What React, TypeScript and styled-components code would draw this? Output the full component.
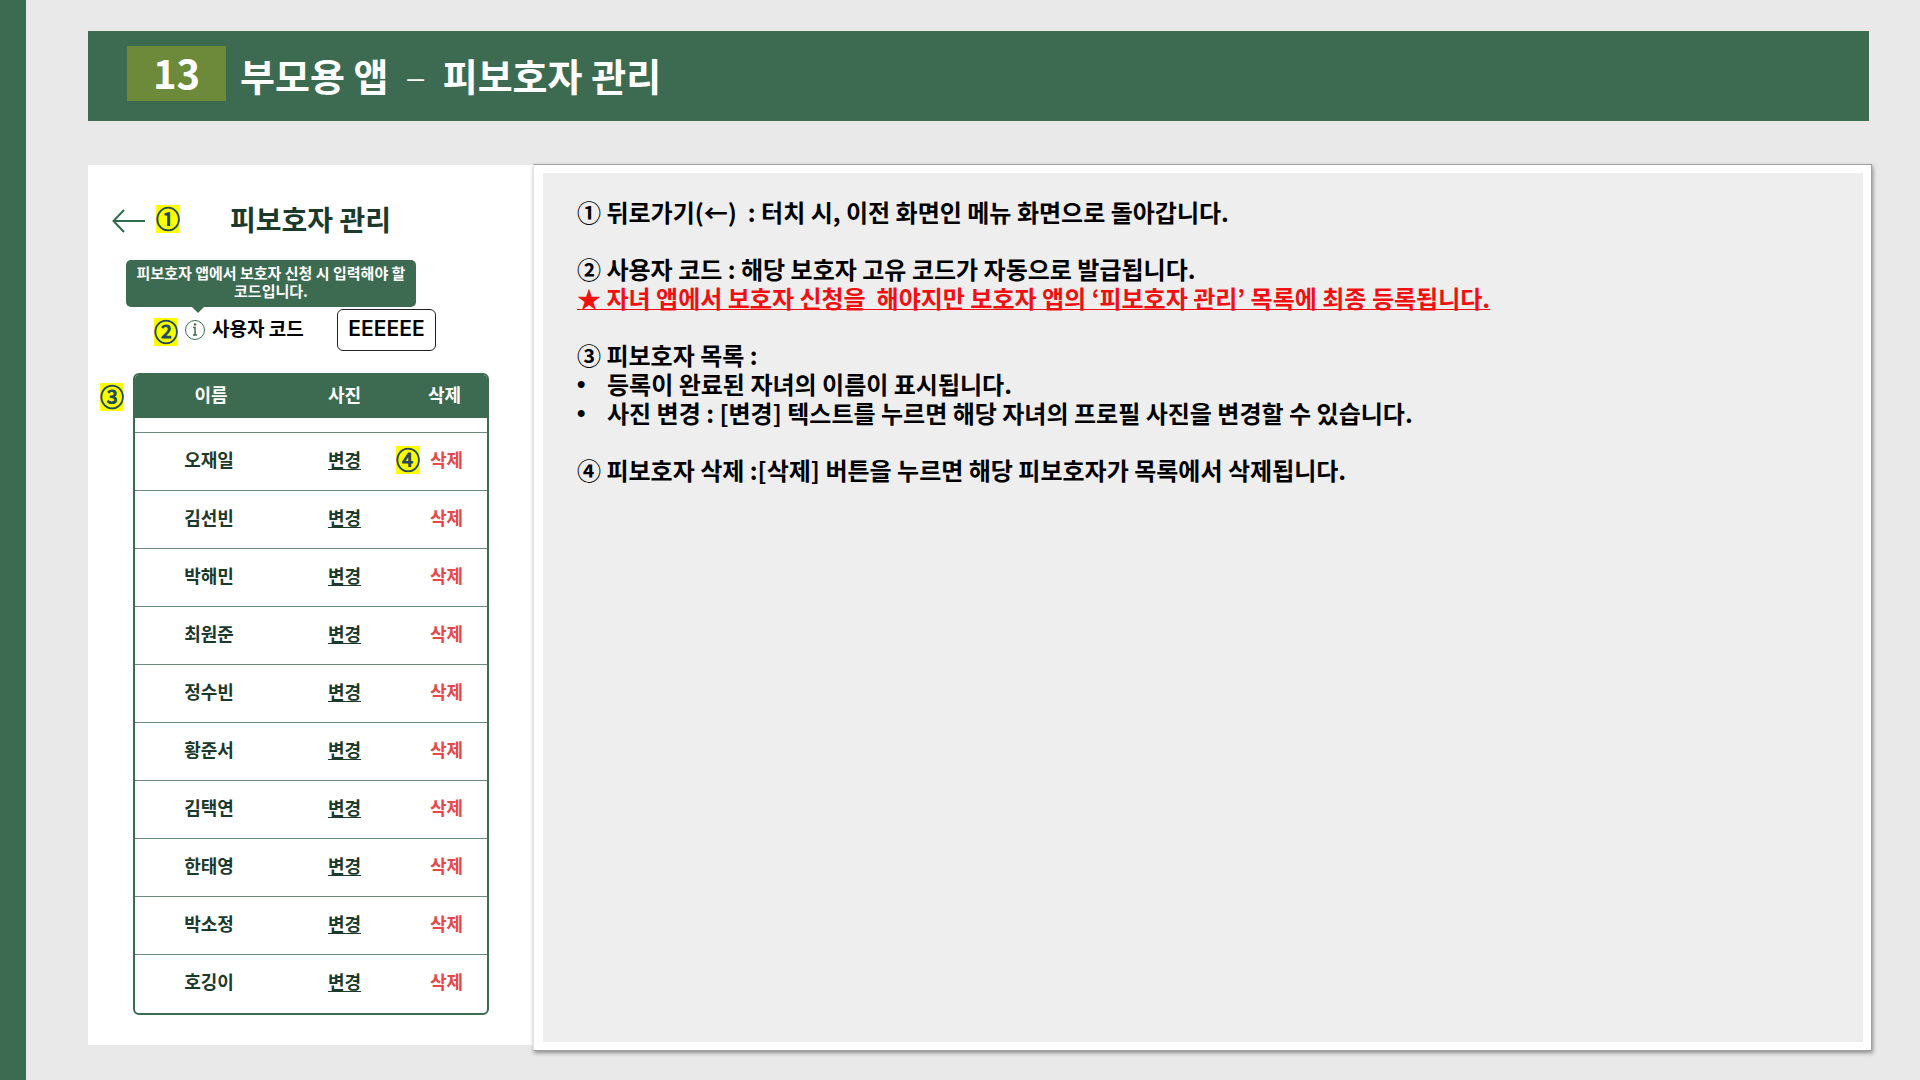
import React from 'react';
import styled, { createGlobalStyle } from 'styled-components';

const green = '#3c6b52';
const ink = '#1c3a2c';

const GlobalStyle = createGlobalStyle`
  *, *::before, *::after { box-sizing: border-box; }
  body {
    margin: 0;
    background: #e9e9e9;
    color: #000;
    font-family: "Noto Sans CJK KR", "Liberation Sans", sans-serif;
    font-weight: 700;
  }
  h1, h2, p, ul { margin: 0; padding: 0; font-size: inherit; font-weight: inherit; }
  button, input { font: inherit; color: inherit; }
`;

const Page = styled.div`
  display: flex;
  min-height: 100vh;
`;

const SideStripe = styled.div`
  flex: 0 0 26px;
  background: ${green};
`;

const Main = styled.main`
  flex: 1;
  display: flex;
  flex-direction: column;
  gap: 43px;
  padding: 31px 48px 29px 62px;
`;

const Header = styled.header`
  display: flex;
  align-items: flex-start;
  gap: 14px;
  height: 90px;
  margin-right: 3px;
  padding: 15px 39px;
  background: ${green};
  color: #fff;
`;

const PageNumber = styled.span`
  width: 99px;
  height: 55px;
  background: #6d8a3a;
  font-size: 40px;
  line-height: 52px;
  text-align: center;
`;

const PageTitle = styled.h1`
  font-size: 38px;
  line-height: 58px;
  white-space: pre;
`;

const Dash = styled.span`
  font-weight: 300;
`;

const Content = styled.div`
  flex: 1;
  display: flex;
`;

const Phone = styled.section`
  flex: 0 0 445px;
  display: flex;
  flex-direction: column;
  margin: 1px 0 6px;
  padding: 32px 44px 30px 24px;
  background: #fff;
`;

const PhoneBar = styled.div`
  display: grid;
  grid-template-columns: 44px 24px 1fr 48px;
  align-items: center;
  height: 44px;
`;

const BackButton = styled.button`
  display: flex;
  padding: 4px 0 0;
  border: 0;
  background: none;
  color: #2f6b4d;
`;

const PhoneTitle = styled.h2`
  color: ${ink};
  font-size: 28px;
  line-height: 40px;
  text-align: center;
`;

const Marker = styled.span`
  display: block;
  width: 23px;
  height: 28px;
  background: #ffff00;
  color: #1f4a5c;
  font-size: 24px;
  font-weight: 400;
  line-height: 26px;
  text-align: center;
  -webkit-text-stroke: 1px #1f4a5c;
`;

const Tooltip = styled.p`
  position: relative;
  width: 290px;
  margin: 19px 0 0 14px;
  padding: 4px 4px 7px;
  border-radius: 5px;
  background: ${green};
  color: #fff;
  font-size: 15px;
  line-height: 18px;
  text-align: center;

  &::after {
    content: '';
    position: absolute;
    top: 100%;
    left: 66px;
    border: 6px solid transparent;
    border-top-color: ${green};
    border-bottom-width: 0;
  }
`;

const CodeRow = styled.div`
  display: flex;
  align-items: center;
  margin: 2px 0 22px 42px;
`;

const CodeMarker = styled(Marker)`
  margin: 4px 8px 0 0;
`;

const CodeLabel = styled.label`
  width: 125px;
  margin-left: 7px;
  padding-bottom: 4px;
  font-size: 19px;
  line-height: 34px;
`;

const CodeInput = styled.input`
  width: 99px;
  height: 42px;
  padding: 0 0 3px;
  border: 1px solid #222;
  border-radius: 6px;
  background: #fff;
  font-family: Inter, "Noto Sans CJK KR", sans-serif;
  font-size: 21px;
  font-weight: 600;
  text-align: center;
`;

const TableWrap = styled.div`
  position: relative;
  margin-left: 21px;
`;

const TableMarker = styled(Marker)`
  position: absolute;
  top: 10px;
  left: -33px;
`;

const Table = styled.table`
  width: 100%;
  table-layout: fixed;
  border: 2px solid ${green};
  border-radius: 6px;
  border-spacing: 0;
  overflow: hidden;
  color: ${ink};
  font-size: 18px;
  line-height: 26px;
  text-align: center;

  th, td { padding: 0; }
  td { height: 58px; padding-bottom: 6px; border-top: 1px solid #6b8a7a; }
  td:first-child { padding-right: 4px; }
  td:last-child { padding-left: 4px; }
  tbody tr:last-child td { height: 59px; }
`;

const HeadCell = styled.th<{ $width?: number }>`
  width: ${(p) => (p.$width ? `${p.$width}px` : 'auto')};
  height: 57px;
  background: linear-gradient(${green} 43px, #fff 43px);
  color: #fff;
  vertical-align: top;

  && { padding-top: 6px; }
`;

const ActionCell = styled.td`
  position: relative;
`;

const RowMarker = styled(Marker)`
  position: absolute;
  top: 13px;
  left: -6px;
`;

const TextButton = styled.button<{ $danger?: boolean }>`
  padding: 0;
  border: 0;
  background: none;
  color: ${(p) => (p.$danger ? '#e8484a' : ink)};
  text-decoration: ${(p) => (p.$danger ? 'none' : 'underline')};
  text-underline-offset: 2px;
`;

const Notes = styled.section`
  flex: 1;
  display: flex;
  padding: 8px 8px 8px 9px;
  border: 1px solid #a0a0a0;
  border-left-color: #e4e4e4;
  background: #fff;
  box-shadow: 1px 2px 4px rgba(0, 0, 0, 0.4);
`;

const NotesBody = styled.div`
  flex: 1;
  display: flex;
  flex-direction: column;
  gap: 28px;
  padding: 24px 34px;
  background: #eee;
  font-size: 24px;
  line-height: 29px;
  white-space: pre-wrap;
`;

const Warning = styled.p`
  color: #f01010;
  text-decoration: underline;
  text-decoration-thickness: 1px;
  text-underline-offset: 1px;
`;

const Bullets = styled.ul`
  list-style: none;

  li { display: flex; }
  li::before { content: '•'; width: 30px; font-family: "Liberation Sans", sans-serif; }
`;

const names = ['오재일', '김선빈', '박해민', '최원준', '정수빈', '황준서', '김택연', '한태영', '박소정', '호깅이'];

export default function App() {
  return (
    <>
      <GlobalStyle />
      <Page>
        <SideStripe />
        <Main>
          <Header>
            <PageNumber>13</PageNumber>
            <PageTitle>부모용 앱 <Dash> – </Dash> 피보호자 관리</PageTitle>
          </Header>
          <Content>
            <Phone>
              <PhoneBar>
                <BackButton type="button" aria-label="뒤로가기">
                  <svg width="34" height="24" viewBox="0 0 34 24" fill="none" stroke="currentColor" strokeWidth="2">
                    <path d="M33 12H2M12 1L1.500 12L12 23" />
                  </svg>
                </BackButton>
                <Marker>①</Marker>
                <PhoneTitle>피보호자 관리</PhoneTitle>
              </PhoneBar>
              <Tooltip>피보호자 앱에서 보호자 신청 시 입력해야 할 코드입니다.</Tooltip>
              <CodeRow>
                <CodeMarker>②</CodeMarker>
                <svg width="20" height="20" viewBox="0 0 20 20" fill="none" stroke={green}>
                  <circle cx="10" cy="10" r="9.500" />
                  <path d="M8 7.500H10V15M8 15H12" strokeWidth="1.500" />
                  <circle cx="10" cy="4.500" r="1.200" fill={green} stroke="none" />
                </svg>
                <CodeLabel htmlFor="user-code">사용자 코드</CodeLabel>
                <CodeInput id="user-code" readOnly value="EEEEEE" />
              </CodeRow>
              <TableWrap>
                <TableMarker>③</TableMarker>
                <Table>
                  <thead>
                    <tr>
                      <HeadCell $width={152}>이름</HeadCell>
                      <HeadCell $width={115}>사진</HeadCell>
                      <HeadCell>삭제</HeadCell>
                    </tr>
                  </thead>
                  <tbody>
                    {names.map((name, i) => (
                      <tr key={name}>
                        <td>{name}</td>
                        <td><TextButton type="button">변경</TextButton></td>
                        <ActionCell>
                          {i === 0 && <RowMarker>④</RowMarker>}
                          <TextButton type="button" $danger>삭제</TextButton>
                        </ActionCell>
                      </tr>
                    ))}
                  </tbody>
                </Table>
              </TableWrap>
            </Phone>
            <Notes>
              <NotesBody>
                <p>① 뒤로가기(←)  : 터치 시, 이전 화면인 메뉴 화면으로 돌아갑니다.</p>
                <div>
                  <p>② 사용자 코드 : 해당 보호자 고유 코드가 자동으로 발급됩니다.</p>
                  <Warning>★ 자녀 앱에서 보호자 신청을  해야지만 보호자 앱의 ‘피보호자 관리’ 목록에 최종 등록됩니다.</Warning>
                </div>
                <div>
                  <p>③ 피보호자 목록 :</p>
                  <Bullets>
                    <li>등록이 완료된 자녀의 이름이 표시됩니다.</li>
                    <li>사진 변경 : [변경] 텍스트를 누르면 해당 자녀의 프로필 사진을 변경할 수 있습니다.</li>
                  </Bullets>
                </div>
                <p>④ 피보호자 삭제 :[삭제] 버튼을 누르면 해당 피보호자가 목록에서 삭제됩니다.</p>
              </NotesBody>
            </Notes>
          </Content>
        </Main>
      </Page>
    </>
  );
}
